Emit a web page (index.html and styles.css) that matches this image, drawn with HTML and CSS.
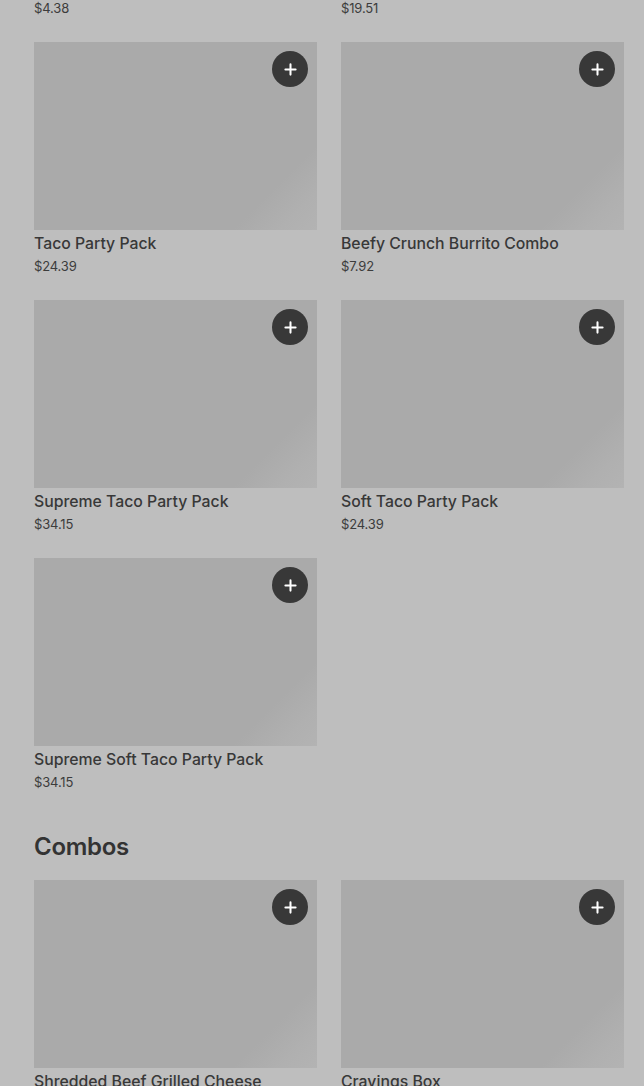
FILE: index.html
```html
<!DOCTYPE html>
<html lang="en">
<head>
<meta charset="utf-8">
<title>Menu</title>
<link rel="stylesheet" href="styles.css">
</head>
<body>
<main class="page">
  <section class="section section-first">
    <div class="grid">
      <div class="card"><div class="thumb"><button class="add" aria-label="Add"><svg viewBox="0 0 14 14" width="13" height="13"><path d="M7 1.5v11M1.5 7h11" stroke="#fff" stroke-width="2.2" stroke-linecap="round"/></svg></button></div><div class="name">Chicken Chipotle Melt</div><div class="price">$4.38</div></div>
      <div class="card"><div class="thumb"><button class="add" aria-label="Add"><svg viewBox="0 0 14 14" width="13" height="13"><path d="M7 1.5v11M1.5 7h11" stroke="#fff" stroke-width="2.2" stroke-linecap="round"/></svg></button></div><div class="name">Nachos Party Pack</div><div class="price">$19.51</div></div>
      <div class="card"><div class="thumb"><button class="add" aria-label="Add"><svg viewBox="0 0 14 14" width="13" height="13"><path d="M7 1.5v11M1.5 7h11" stroke="#fff" stroke-width="2.2" stroke-linecap="round"/></svg></button></div><div class="name">Taco Party Pack</div><div class="price">$24.39</div></div>
      <div class="card"><div class="thumb"><button class="add" aria-label="Add"><svg viewBox="0 0 14 14" width="13" height="13"><path d="M7 1.5v11M1.5 7h11" stroke="#fff" stroke-width="2.2" stroke-linecap="round"/></svg></button></div><div class="name">Beefy Crunch Burrito Combo</div><div class="price">$7.92</div></div>
      <div class="card"><div class="thumb"><button class="add" aria-label="Add"><svg viewBox="0 0 14 14" width="13" height="13"><path d="M7 1.5v11M1.5 7h11" stroke="#fff" stroke-width="2.2" stroke-linecap="round"/></svg></button></div><div class="name">Supreme Taco Party Pack</div><div class="price">$34.15</div></div>
      <div class="card"><div class="thumb"><button class="add" aria-label="Add"><svg viewBox="0 0 14 14" width="13" height="13"><path d="M7 1.5v11M1.5 7h11" stroke="#fff" stroke-width="2.2" stroke-linecap="round"/></svg></button></div><div class="name">Soft Taco Party Pack</div><div class="price">$24.39</div></div>
      <div class="card"><div class="thumb"><button class="add" aria-label="Add"><svg viewBox="0 0 14 14" width="13" height="13"><path d="M7 1.5v11M1.5 7h11" stroke="#fff" stroke-width="2.2" stroke-linecap="round"/></svg></button></div><div class="name">Supreme Soft Taco Party Pack</div><div class="price">$34.15</div></div>
    </div>
  </section>
  <section class="section">
    <h2 class="heading">Combos</h2>
    <div class="grid">
      <div class="card"><div class="thumb"><button class="add" aria-label="Add"><svg viewBox="0 0 14 14" width="13" height="13"><path d="M7 1.5v11M1.5 7h11" stroke="#fff" stroke-width="2.2" stroke-linecap="round"/></svg></button></div><div class="name">Shredded Beef Grilled Cheese</div><div class="price">$9.49</div></div>
      <div class="card"><div class="thumb"><button class="add" aria-label="Add"><svg viewBox="0 0 14 14" width="13" height="13"><path d="M7 1.5v11M1.5 7h11" stroke="#fff" stroke-width="2.2" stroke-linecap="round"/></svg></button></div><div class="name">Cravings Box</div><div class="price">$7.49</div></div>
    </div>
  </section>
</main>
</body>
</html>
```

FILE: styles.css
```css
html, body {
  margin: 0;
  padding: 0;
  background: #bebebe;
  overflow: hidden;
}
body {
  font-family: Inter, Roboto, "Liberation Sans", Arial, sans-serif;
  color: #353535;
}
.page {
  padding: 0 20px 40px 34px;
}
.section-first {
  margin-top: -216px;
}
.section + .section {
  margin-top: 40px;
}
.heading {
  margin: 0 0 17px;
  font-family: Inter, "Open Sans", sans-serif;
  font-size: 24px;
  font-weight: 600;
  line-height: 32px;
  letter-spacing: -0.3px;
  color: #333;
}
.grid {
  display: grid;
  grid-template-columns: 283px 283px;
  column-gap: 24px;
  row-gap: 25px;
}
.card {
  display: flex;
  flex-direction: column;
}
.thumb {
  position: relative;
  height: 188px;
  background: linear-gradient(135deg, #aaaaaa 0%, #aaaaaa 82%, #b0b0b0 92%, #b3b3b3 100%);
}
.add {
  position: absolute;
  top: 9px;
  right: 9px;
  width: 36px;
  height: 36px;
  border: 0;
  border-radius: 50%;
  background: #383838;
  padding: 0;
  display: flex;
  align-items: center;
  justify-content: center;
}
.add svg {
  display: block;
}
.name {
  margin-top: 3px;
  font-size: 15.8px;
  font-weight: 500;
  line-height: 22px;
  color: #383838;
}
.price {
  margin-top: 2px;
  font-size: 13px;
  line-height: 18px;
  letter-spacing: -0.15px;
  color: #3c3c3c;
}
```
